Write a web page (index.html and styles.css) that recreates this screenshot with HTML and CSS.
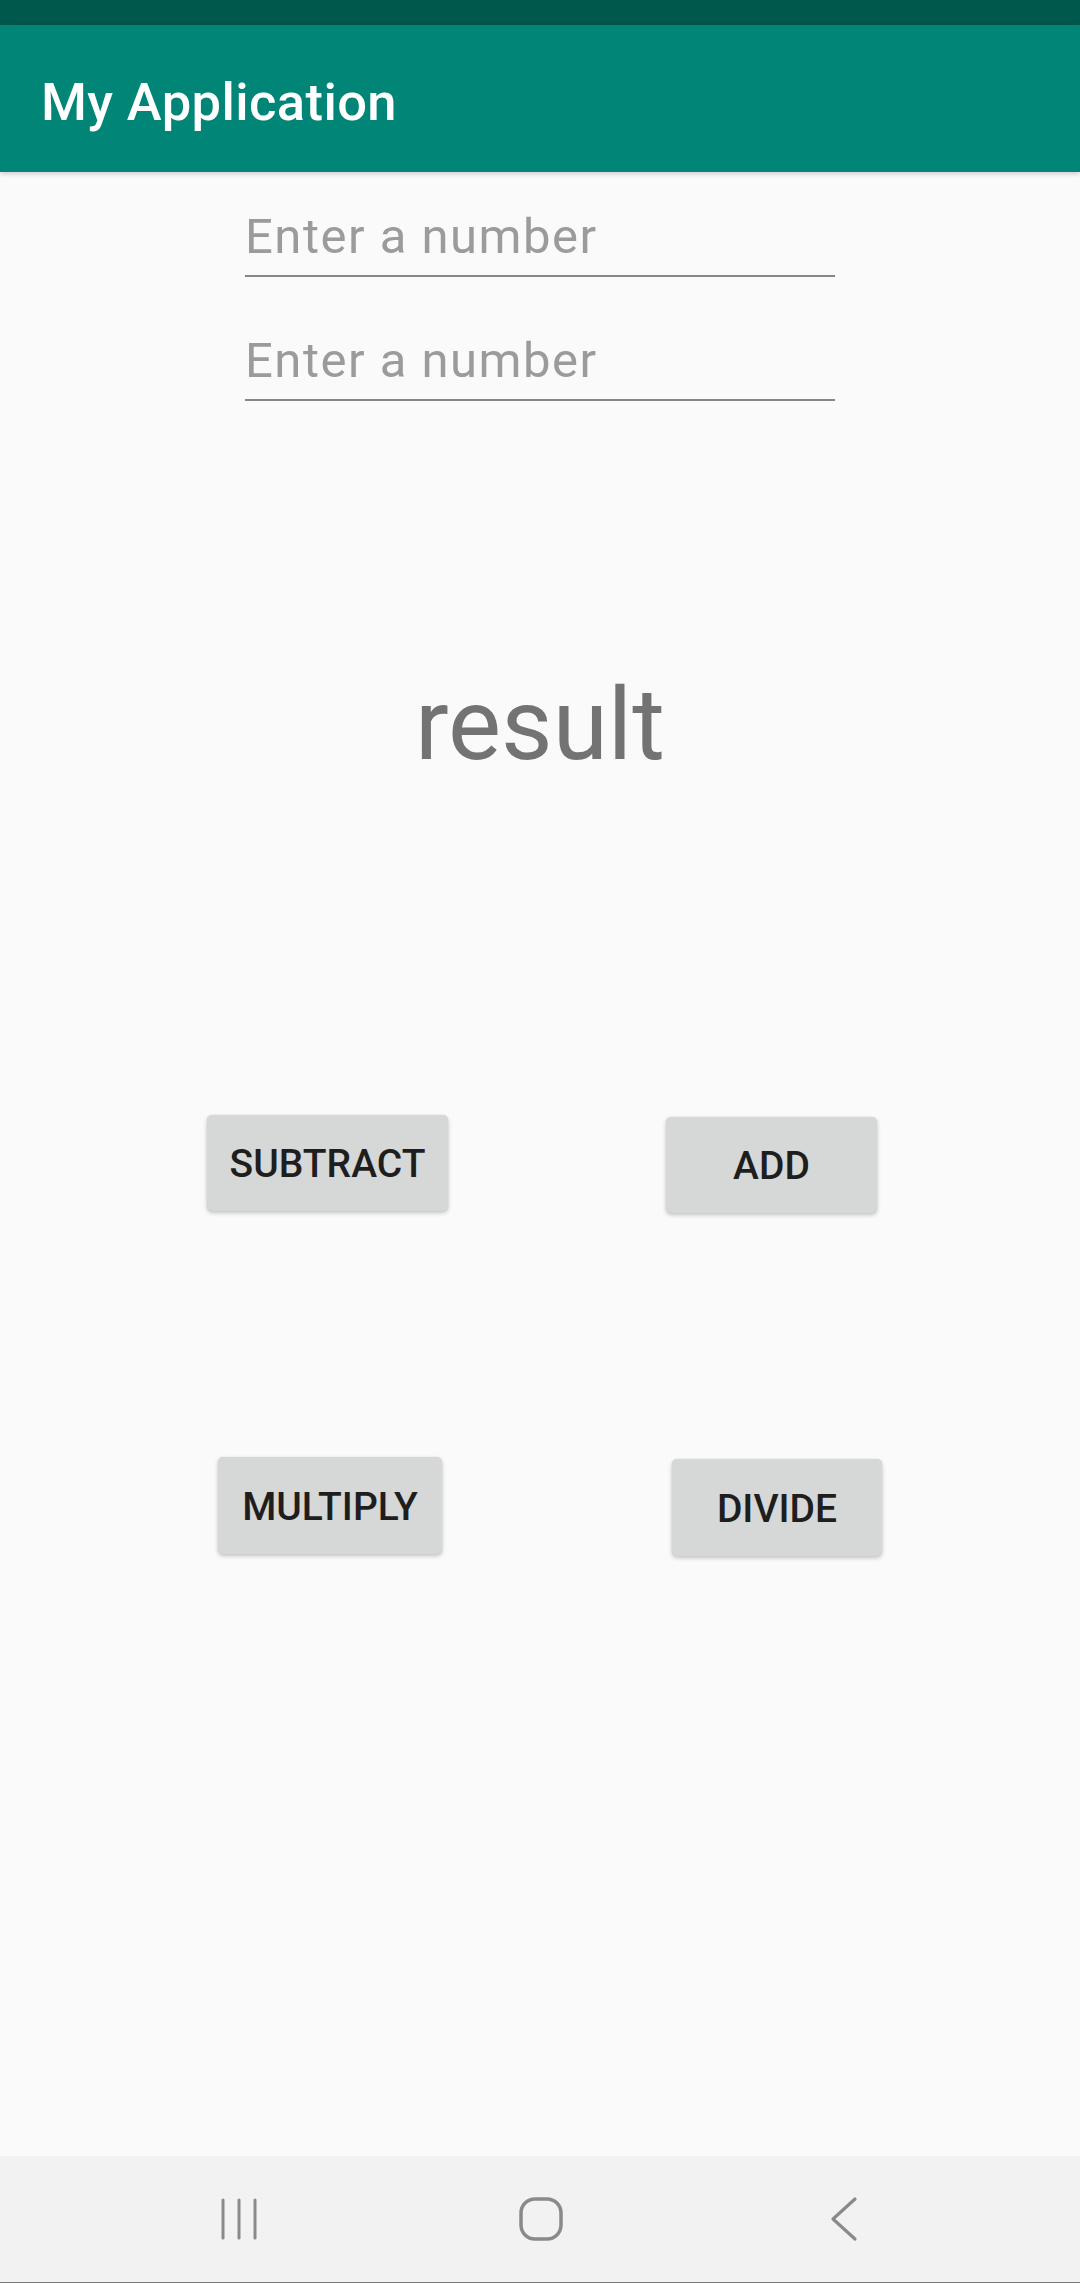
FILE: index.html
```html
<!DOCTYPE html>
<html>
<head>
<meta charset="utf-8">
<link rel="stylesheet" href="styles.css">
</head>
<body>
<div class="screen">
  <div class="status-bar"></div>
  <header class="app-bar"><span class="title">My Application</span></header>
  <main class="content">
    <div class="edit edit-first">Enter a number</div>
    <div class="edit edit-second">Enter a number</div>
    <div class="result">result</div>
    <div class="btn-row row-one">
      <div class="btn btn-subtract">SUBTRACT</div>
      <div class="btn btn-add">ADD</div>
    </div>
    <div class="btn-row row-two">
      <div class="btn btn-multiply">MULTIPLY</div>
      <div class="btn btn-divide">DIVIDE</div>
    </div>
  </main>
  <nav class="nav-bar">
    <div class="nav-slot slot-recents">
      <svg width="40" height="44" viewBox="0 0 40 44"><g stroke="#8a8a8a" stroke-width="3" stroke-linecap="round" fill="none"><line x1="3" y1="3" x2="3" y2="41"/><line x1="19" y1="3" x2="19" y2="41"/><line x1="35" y1="3" x2="35" y2="41"/></g></svg>
    </div>
    <div class="nav-slot slot-home">
      <svg width="48" height="46" viewBox="0 0 48 46"><rect x="4" y="3" width="40" height="40" rx="14" ry="14" stroke="#8a8a8a" stroke-width="3.5" fill="none"/></svg>
    </div>
    <div class="nav-slot slot-back">
      <svg width="30" height="46" viewBox="0 0 30 46"><polyline points="26,3 4,23 26,43" stroke="#8a8a8a" stroke-width="3.2" stroke-linecap="round" stroke-linejoin="round" fill="none"/></svg>
    </div>
  </nav>
</div>
</body>
</html>
```
FILE: styles.css
```css
* { box-sizing: border-box; }
html, body { margin: 0; padding: 0; }
body { font-family: Roboto, "Noto Sans", sans-serif; background: #fafafa; }
.screen { width: 1080px; height: 2283px; display: flex; flex-direction: column; overflow: hidden; }
.status-bar { height: 25px; background: #00574b; flex: none; }
.app-bar {
  height: 147px; flex: none; background: #008577;
  padding: 7px 0 0 41px;
  box-shadow: 0 2px 5px rgba(0,0,0,0.18);
  position: relative; z-index: 1;
}
.title { display: block; color: #fff; font-size: 52.5px; font-weight: 500; line-height: 140px; letter-spacing: 0.4px; }
.content { flex: 1; background: #fafafa; display: flex; flex-direction: column; }
.edit {
  margin-left: 245px; width: 590px;
  font-size: 49px; line-height: 60px; color: #9b9b9b; letter-spacing: 1.5px;
  padding-bottom: 8px; border-bottom: 2px solid #868686;
}
.edit-first { margin-top: 35px; }
.edit-second { margin-top: 54px; }
.result {
  margin-top: 264px; text-align: center;
  font-size: 100px; line-height: 120px; color: #737373;
}
.btn-row { display: flex; align-items: flex-start; }
.row-one { margin-top: 330px; }
.row-two { margin-top: 244px; }
.btn {
  display: flex; align-items: center; justify-content: center;
  background: #d6d7d7; border-radius: 5px;
  box-shadow: 0 2px 4px rgba(0,0,0,0.22), 0 0 1px rgba(0,0,0,0.12);
  font-size: 39px; font-weight: 500; color: #1e1e1e; letter-spacing: 0;
  padding-top: 2px;
}
.btn-subtract { margin-left: 207px; width: 241px; height: 96px; }
.btn-add { margin-left: 218px; margin-top: 2px; width: 211px; height: 96px; }
.btn-multiply { margin-left: 218px; width: 224px; height: 97px; }
.btn-divide { margin-left: 230px; margin-top: 2px; width: 210px; height: 97px; }
.nav-bar {
  height: 127px; flex: none; background: #f2f2f2;
  border-bottom: 1px solid #7a7a7a;
  display: flex; align-items: center;
}
.nav-slot { display: flex; align-items: center; justify-content: center; width: 60px; }
.slot-recents { margin-left: 210px; }
.slot-home { margin-left: 241px; }
.slot-back { margin-left: 243px; }
```
